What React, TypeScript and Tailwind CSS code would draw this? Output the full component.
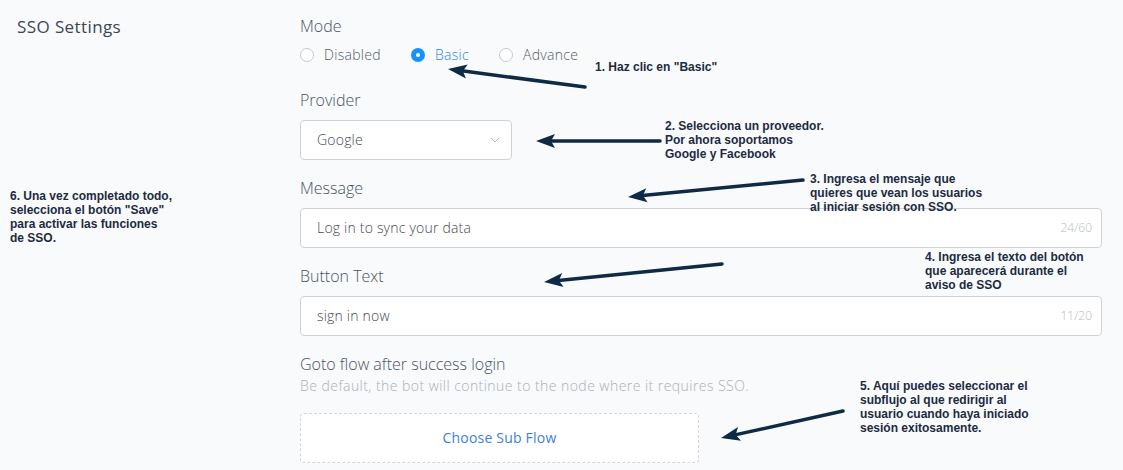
import React from "react";

const notes = [
  { x: 595, y: 60, lines: ['1. Haz clic en "Basic"'] },
  { x: 665, y: 119, lines: ["2. Selecciona un proveedor.", "Por ahora soportamos", "Google y Facebook"] },
  { x: 810, y: 172, lines: ["3. Ingresa el mensaje que", "quieres que vean los usuarios", "al iniciar sesión con SSO."] },
  { x: 925, y: 250, lines: ["4. Ingresa el texto del botón", "que aparecerá durante el", "aviso de SSO"] },
  { x: 860, y: 379, lines: ["5. Aquí puedes seleccionar el", "subflujo al que redirigir al", "usuario cuando haya iniciado", "sesión exitosamente."] },
  { x: 10, y: 189, lines: ["6. Una vez completado todo,", 'selecciona el botón "Save"', "para activar las funciones", "de SSO."] },
];

const arrows = [
  [585, 87, 448, 69],
  [660, 141, 536, 141],
  [803, 180, 628, 197],
  [722, 264, 544, 282],
  [843, 411, 721, 438],
];

const Radio = ({ label, checked }: { label: string; checked?: boolean }) => (
  <label className="flex items-center gap-[10px]">
    {checked ? (
      <span className="flex size-[14px] items-center justify-center rounded-full bg-[#1890ff]">
        <span className="size-[4px] rounded-full bg-white" />
      </span>
    ) : (
      <span className="size-[14px] rounded-full border border-[#c5c9cf] bg-white" />
    )}
    <span className={checked ? "text-[#2f80ed]" : "text-[#555b63]"}>{label}</span>
  </label>
);

const Field = ({ label, value, count }: { label: string; value: string; count: string }) => (
  <div className="mt-4">
    <div className="text-base leading-6 font-light text-[#4a5560]">{label}</div>
    <div className="mt-2 flex h-10 w-[802px] items-center justify-between rounded-[4px] border border-[#cfd3d8] bg-white pl-4 pr-[9px]">
      <span className="text-sm font-light tracking-[0.2px] text-[#3f4a55]">{value}</span>
      <span className="text-xs font-light text-[#b8bcc2]">{count}</span>
    </div>
  </div>
);

export default function App() {
  return (
    <div
      className="relative min-h-[470px] w-full bg-[#f8fafc]"
      style={{ fontFamily: "'Open Sans', sans-serif" }}
    >
      <div className="flex">
        <div className="w-[300px] pl-[17px] pt-[15px]">
          <h1 className="text-[17px] leading-6 tracking-[0.4px] text-[#3d4650]">SSO Settings</h1>
        </div>

        <div className="pt-[14px]">
          <div className="text-base leading-6 font-light text-[#4a5560]">Mode</div>
          <div className="mt-[7px] flex h-5 items-center gap-[30px] text-sm font-light tracking-[0.3px]">
            <Radio label="Disabled" />
            <Radio label="Basic" checked />
            <Radio label="Advance" />
          </div>

          <div className="mt-[23px] text-base leading-6 font-light text-[#4a5560]">Provider</div>
          <div className="mt-2 flex h-10 w-[212px] items-center justify-between rounded-[4px] border border-[#cfd3d8] bg-white pl-4 pr-[11px]">
            <span className="text-sm font-light tracking-[0.2px] text-[#3f4a55]">Google</span>
            <svg width="10" height="6" viewBox="0 0 10 6" fill="none">
              <path d="M1 1l4 4 4-4" stroke="#b5bac0" strokeWidth="1" />
            </svg>
          </div>

          <Field label="Message" value="Log in to sync your data" count="24/60" />
          <Field label="Button Text" value="sign in now" count="11/20" />

          <div className="mt-4 text-base leading-6 font-light text-[#4a5560]">Goto flow after success login</div>
          <div className="text-sm leading-5 font-light tracking-[0.45px] text-[#aab0b7]">
            Be default, the bot will continue to the node where it requires SSO.
          </div>
          <div className="mt-[17px] flex h-[50px] w-[399px] items-center justify-center rounded-[4px] border border-dashed border-[#d3d7dc] bg-white text-sm tracking-[0.2px] text-[#3d7fd9]">
            Choose Sub Flow
          </div>
        </div>
      </div>

      <svg className="pointer-events-none absolute left-0 top-0" width="1123" height="470">
        {arrows.map(([x1, y1, x2, y2], i) => {
          const a = (Math.atan2(y1 - y2, x1 - x2) * 180) / Math.PI;
          const len = Math.hypot(x1 - x2, y1 - y2);
          return (
            <g key={i} transform={`translate(${x2} ${y2}) rotate(${a})`}>
              <line x1="12" y1="0" x2={len} y2="0" stroke="#0f2a44" strokeWidth="3.5" strokeLinecap="round" />
              <path d="M0 0 L19 -7 L15 0 L19 7 Z" fill="#0f2a44" />
            </g>
          );
        })}
      </svg>

      {notes.map((n, i) => (
        <div
          key={i}
          className="absolute text-[12px] leading-[14px] font-bold text-[#1c2b40]"
          style={{ left: n.x, top: n.y, fontFamily: "'Liberation Sans', Arial, sans-serif" }}
        >
          {n.lines.map((l, j) => (
            <div key={j} className="whitespace-nowrap">
              {l}
            </div>
          ))}
        </div>
      ))}
    </div>
  );
}
